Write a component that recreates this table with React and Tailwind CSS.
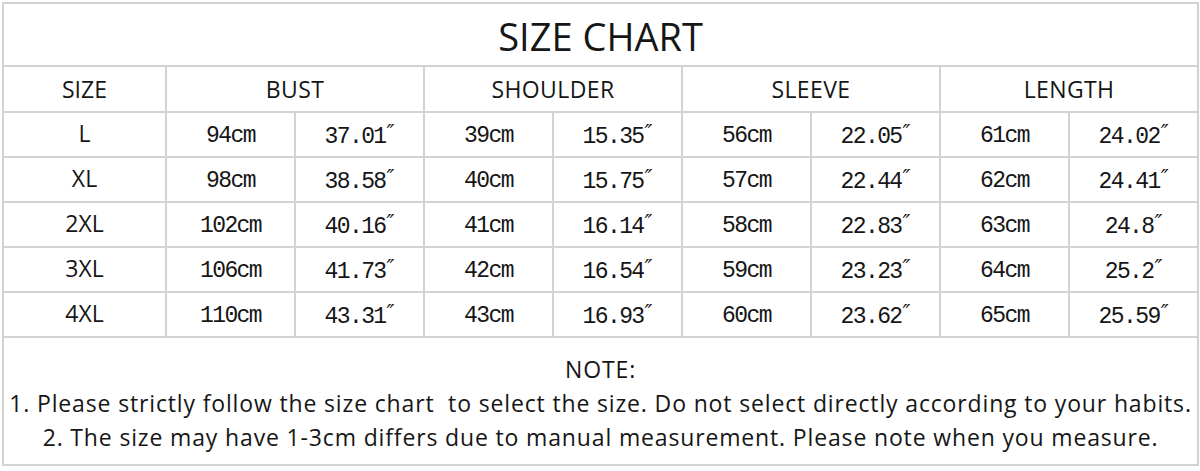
import React from "react";

const ROWS = [
  { size: "L", vals: ["94cm", "37.01″", "39cm", "15.35″", "56cm", "22.05″", "61cm", "24.02″"] },
  { size: "XL", vals: ["98cm", "38.58″", "40cm", "15.75″", "57cm", "22.44″", "62cm", "24.41″"] },
  { size: "2XL", vals: ["102cm", "40.16″", "41cm", "16.14″", "58cm", "22.83″", "63cm", "24.8″"] },
  { size: "3XL", vals: ["106cm", "41.73″", "42cm", "16.54″", "59cm", "23.23″", "64cm", "25.2″"] },
  { size: "4XL", vals: ["110cm", "43.31″", "43cm", "16.93″", "60cm", "23.62″", "65cm", "25.59″"] },
];

const HEADS = ["BUST", "SHOULDER", "SLEEVE", "LENGTH"];

const sans = "font-['Open_Sans','Noto_Sans',sans-serif]";
const mono = "font-['Liberation_Mono','DejaVu_Sans_Mono',monospace]";
const cell = "border-2 border-[#d3d3d3] text-center p-0";

// inch values end in a double prime, drawn a bit higher and slanted
const Value = ({ v }) => {
  if (!v.endsWith("″")) return v;
  return (
    <>
      {v.slice(0, -1)}
      <span className="font-['DejaVu_Sans',sans-serif] italic text-[21px] align-[3px] tracking-normal ml-[1px]">″</span>
    </>
  );
};

export default function App() {
  return (
    <div className="w-[1200px] h-[471px] bg-white pt-[2px] pl-[2px] text-[#161616]">
      <table className="border-collapse table-fixed w-[1195px]">
        <colgroup>
          <col className="w-[163px]" />
          {[...Array(8)].map((_, i) => (
            <col key={i} className="w-[129px]" />
          ))}
        </colgroup>
        <tbody>
          {/* Title */}
          <tr className="h-[63px]">
            <td colSpan={9} className={`${cell} ${sans} text-[38px] leading-none pt-[2px]`}>
              SIZE CHART
            </td>
          </tr>

          {/* Headers */}
          <tr className="h-[46px]">
            <td className={`${cell} ${sans} text-[23px]`}>SIZE</td>
            {HEADS.map((h) => (
              <td key={h} colSpan={2} className={`${cell} ${sans} text-[23px] tracking-[0.4px]`}>
                {h}
              </td>
            ))}
          </tr>

          {/* Rows */}
          {ROWS.map((r) => (
            <tr key={r.size} className="h-[45px]">
              <td className={`${cell} ${sans} text-[23px] pb-[2px]`}>{r.size}</td>
              {r.vals.map((v, i) => (
                <td key={i} className={`${cell} ${mono} text-[23px] tracking-[-1.6px] pt-[3px]`}>
                  <Value v={v} />
                </td>
              ))}
            </tr>
          ))}

          {/* Notes */}
          <tr className="h-[128px]">
            <td colSpan={9} className={`${cell} ${sans} text-[23px] tracking-[0.85px] leading-[34px] align-top pt-[14px]`}>
              <p>NOTE:</p>
              <p className="whitespace-nowrap">
                1. Please strictly follow the size chart&nbsp; to select the size. Do not select directly according to your habits.
              </p>
              <p className="whitespace-nowrap">
                2. The size may have 1-3cm differs due to manual measurement. Please note when you measure.
              </p>
            </td>
          </tr>
        </tbody>
      </table>
    </div>
  );
}
